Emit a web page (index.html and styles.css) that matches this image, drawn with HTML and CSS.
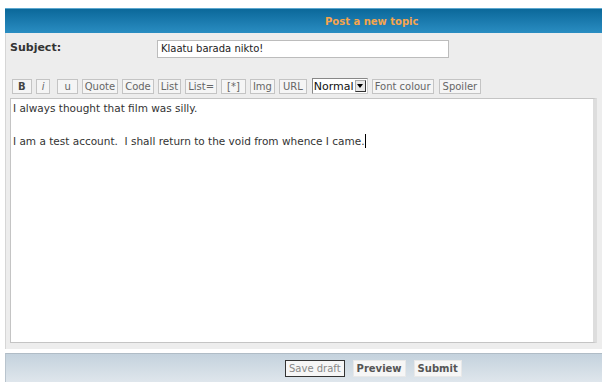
FILE: index.html
```html
<!DOCTYPE html>
<html lang="en">
<head>
    <meta charset="UTF-8">
    <title>Post a new topic</title>
    <link rel="stylesheet" href="styles.css">
</head>
<body>
    <div class="post-form">
        <div class="cat-bar">Post a new topic</div>

        <div class="panel">
            <div class="subject-row">
                <label class="subject-label">Subject:</label>
                <div class="subject-input">Klaatu barada nikto!</div>
            </div>

            <div class="toolbar">
                <span class="tb-btn bold">B</span>
                <span class="tb-btn italic">i</span>
                <span class="tb-btn under">u</span>
                <span class="tb-btn">Quote</span>
                <span class="tb-btn">Code</span>
                <span class="tb-btn">List</span>
                <span class="tb-btn">List=</span>
                <span class="tb-btn wide">[*]</span>
                <span class="tb-btn">Img</span>
                <span class="tb-btn url">URL</span>
                <span class="size-select">Normal<span class="arrow"></span></span>
                <span class="tb-btn">Font colour</span>
                <span class="tb-btn spoiler">Spoiler</span>
            </div>

            <div class="message">
                <p>I always thought that film was silly.</p>
                <p>I am a test account.&nbsp; I shall return to the void from whence I came.<span class="caret"></span></p>
            </div>
        </div>

        <div class="submit-bar">
            <span class="btn draft">Save draft</span>
            <span class="btn">Preview</span>
            <span class="btn">Submit</span>
        </div>
    </div>
</body>
</html>
```

FILE: styles.css
```css
body {
    margin: 0;
    background-color: #fff;
    font-family: "DejaVu Sans", Verdana, sans-serif;
    color: #333;
}
.post-form {
    padding: 8px 0 0 5px;
}
.cat-bar {
    height: 25px;
    line-height: 25px;
    background: linear-gradient(#0b689a, #2a8dc2);
    border-top: 1px solid #5da8cf;
    box-sizing: border-box;
    color: #f7a54c;
    font-size: 10px;
    font-weight: bold;
    padding-left: 320px;
}
.panel {
    background-color: #ededed;
    border-left: 1px solid #d6d6d6;
    padding: 7px 0 6px 4px;
}
.subject-row {
    display: flex;
    align-items: center;
    height: 18px;
}
.subject-label {
    width: 147px;
    font-size: 11px;
    font-weight: bold;
    color: #333;
    margin-top: -4px;
}
.subject-input {
    width: 292px;
    height: 18px;
    box-sizing: border-box;
    border: 1px solid #bcbcbc;
    background: #fff;
    font-size: 10px;
    line-height: 16px;
    padding-left: 3px;
    color: #222;
}
.toolbar {
    display: flex;
    align-items: center;
    gap: 4px;
    margin: 20px 0 4px 2px;
    height: 16px;
}
.tb-btn {
    height: 15px;
    line-height: 13px;
    box-sizing: border-box;
    border: 1px solid #c4c4c4;
    background: #f5f5f5;
    font-size: 10px;
    color: #666;
    padding: 0 2px;
}
.tb-btn.bold {
    font-weight: bold;
    padding: 0 5px;
    color: #444;
}
.tb-btn.italic {
    font-style: italic;
    padding: 0 5px;
}
.tb-btn.under {
    padding: 0 6px;
    margin-left: 3px;
}
.tb-btn.wide {
    padding: 0 5px;
}
.tb-btn.url {
    padding: 0 3px;
    margin-right: 1px;
}
.tb-btn.spoiler {
    padding: 0 3px;
    margin-left: 1px;
}
.size-select {
    display: flex;
    align-items: center;
    height: 16px;
    box-sizing: border-box;
    border: 1px solid #888;
    border-right-color: #ccc;
    border-bottom-color: #ccc;
    background: #fff;
    font-size: 11px;
    color: #111;
    padding-left: 1px;
}
.arrow {
    width: 11px;
    height: 12px;
    margin-left: 1px;
    margin-right: 1px;
    background: #e8e8e8;
    border: 1px solid #aaa;
    border-right-color: #333;
    border-bottom-color: #333;
    box-sizing: border-box;
    position: relative;
}
.arrow::after {
    content: "";
    position: absolute;
    left: 1px;
    top: 3px;
    border-left: 3.5px solid transparent;
    border-right: 3.5px solid transparent;
    border-top: 4px solid #000;
}
.message {
    width: 587px;
    height: 245px;
    box-sizing: border-box;
    border: 1px solid #c4c4c4;
    border-right: 4px solid #ddd;
    background: #fff;
    font-size: 10.5px;
    line-height: 17px;
    color: #333;
    padding: 1px 2px;
}
.message p {
    margin: 0 0 16px;
}
.caret {
    display: inline-block;
    width: 1px;
    height: 14px;
    background: #000;
    vertical-align: -3px;
}
.submit-bar {
    margin-top: 4px;
    height: 29px;
    box-sizing: border-box;
    background: linear-gradient(#c4d2dd, #dfe6ec);
    border-top: 1px solid #b0bcc6;
    border-left: 1px solid #b9c4cd;
    display: flex;
    align-items: center;
    gap: 8px;
    padding-left: 279px;
}
.btn {
    height: 17px;
    line-height: 15px;
    box-sizing: border-box;
    border: 1px solid #e8e8e8;
    background: #f6f6f6;
    font-size: 10px;
    font-weight: bold;
    color: #555;
    padding: 0 3px;
}
.btn.draft {
    font-weight: normal;
    color: #888;
    border-color: #333;
}
```
